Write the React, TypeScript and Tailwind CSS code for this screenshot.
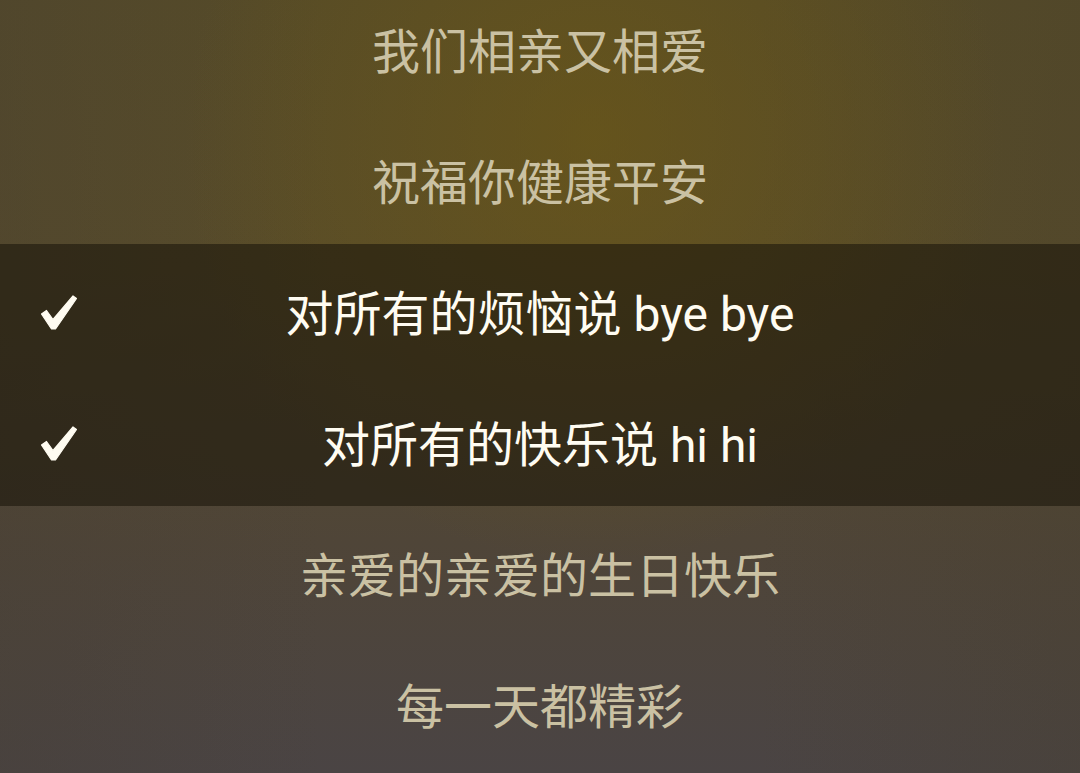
const lyrics = [
  { text: "我们相亲又相爱", selected: false },
  { text: "祝福你健康平安", selected: false },
  { text: "对所有的烦恼说 bye bye", selected: true },
  { text: "对所有的快乐说 hi hi", selected: true },
  { text: "亲爱的亲爱的生日快乐", selected: false },
  { text: "每一天都精彩", selected: false },
]

function Check() {
  return (
    <svg width="38" height="36" viewBox="0 0 38 36" className="text-[#fffcf2]">
      <path
        d="M1.5 19 L6.5 15.5 L13 24.5 L33 1 L36.5 3.5 L15.5 34 L11.5 34 Z"
        fill="currentColor"
        stroke="currentColor"
        strokeWidth="1.2"
        strokeLinejoin="round"
      />
    </svg>
  )
}

export default function App() {
  return (
    <div
      className="h-screen w-full overflow-hidden bg-[radial-gradient(ellipse_38%_55%_at_55%_18%,rgba(112,90,18,0.55),transparent),linear-gradient(to_right,rgba(70,62,52,0.35),transparent_30%,transparent_70%,rgba(70,62,44,0.3)),linear-gradient(to_bottom,#564b28,#584c2a_35%,#4f4538_70%,#4a4444)]"
      style={{ fontFamily: 'Roboto, "Noto Sans CJK SC", sans-serif' }}
    >
      <div className="-mt-[18px] flex flex-col">
        {lyrics.map((line, i) => (
          <div
            key={i}
            className={`grid h-[131px] grid-cols-[118px_1fr_118px] items-center ${line.selected ? "bg-[rgba(28,24,12,0.6)]" : ""}`}
          >
            <div className="flex justify-center pt-[6px]">{line.selected && <Check />}</div>
            <div
              className={`pt-[10px] text-center text-[48px] leading-none ${line.selected ? "text-[#fffcf2]" : "text-[#cac1a3]"}`}
            >
              {line.text}
            </div>
            <div />
          </div>
        ))}
      </div>
    </div>
  )
}
